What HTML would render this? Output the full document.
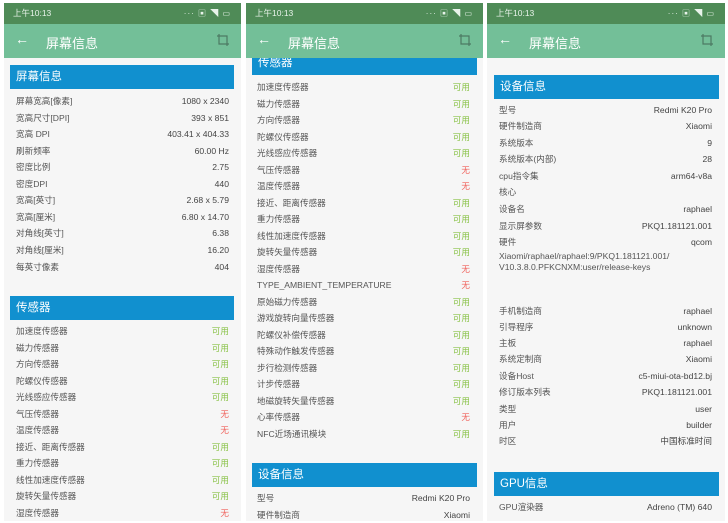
<!DOCTYPE html>
<html><head><meta charset="utf-8"><style>
*{margin:0;padding:0;box-sizing:border-box}
body{width:728px;height:521px;background:#fff;position:relative;overflow:hidden;font-family:"Liberation Sans","Noto Sans CJK SC",sans-serif}
.p{position:absolute;top:3px;height:518px;background:#f6f6f6;overflow:hidden}
.sb{position:absolute;left:0;right:0;top:0;height:21px;background:#4f8b57;color:#e8f3ea;font-size:8.5px;line-height:21px;padding-left:9px}
.sb i{position:absolute;right:10px;top:0;font-style:normal;font-size:8px;letter-spacing:1px}
.tb{position:absolute;left:0;right:0;top:21px;height:34px;background:#73bf98;color:#fff}
.tb .a{position:absolute;left:11px;top:7px;font-size:14px}
.tb .t{position:absolute;left:42px;top:9px;font-size:13px}
.tb svg{position:absolute;right:11px;top:9px}
.h{position:absolute;background:#1190cf;color:#fff;font-size:11.5px;line-height:24px;padding-left:6px;height:24px}
.r{position:absolute;height:16px;line-height:16px;font-size:8.6px;color:#555;white-space:nowrap}
.v{position:absolute;height:16px;line-height:16px;font-size:8.6px;color:#444;text-align:right;white-space:nowrap}
.g{color:#8bc34a}.n{color:#f0605a}
</style></head><body>

<div class="p" style="left:4px;width:237px"></div>
<div class="p" style="left:246px;width:237px"></div>
<div class="p" style="left:487px;width:238px"></div>

<!-- bars -->
<div class="p" style="left:4px;width:237px;background:none">
<div class="sb">上午10:13<i>··· ▣ ◥ ▭</i></div>
<div class="tb"><span class="a">←</span><span class="t">屏幕信息</span><svg width="14" height="14" viewBox="0 0 14 14" fill="none" stroke="#4d7a63" stroke-width="1.2"><path d="M3 1v10h10M1 3h10v10"/></svg></div>
</div>
<div class="p" style="left:246px;width:237px;background:none">
<div class="h" style="left:6px;width:225px;top:34px;height:38px;padding-top:14px;line-height:24px">传感器</div>
<div class="sb">上午10:13<i>··· ▣ ◥ ▭</i></div>
<div class="tb"><span class="a">←</span><span class="t">屏幕信息</span><svg width="14" height="14" viewBox="0 0 14 14" fill="none" stroke="#4d7a63" stroke-width="1.2"><path d="M3 1v10h10M1 3h10v10"/></svg></div>
</div>
<div class="p" style="left:487px;width:238px;background:none">
<div class="sb">上午10:13<i>··· ▣ ◥ ▭</i></div>
<div class="tb"><span class="a">←</span><span class="t">屏幕信息</span><svg width="14" height="14" viewBox="0 0 14 14" fill="none" stroke="#4d7a63" stroke-width="1.2"><path d="M3 1v10h10M1 3h10v10"/></svg></div>
</div>

<!-- panel 1 -->
<div class="h" style="left:10px;width:224px;top:65px">屏幕信息</div>
<div class="r" style="left:16px;top:93px">屏幕宽高[像素]</div><div class="v" style="right:499px;top:93px">1080 x 2340</div>
<div class="r" style="left:16px;top:110px">宽高尺寸[DPI]</div><div class="v" style="right:499px;top:110px">393 x 851</div>
<div class="r" style="left:16px;top:126px">宽高 DPI</div><div class="v" style="right:499px;top:126px">403.41 x 404.33</div>
<div class="r" style="left:16px;top:143px">刷新频率</div><div class="v" style="right:499px;top:143px">60.00 Hz</div>
<div class="r" style="left:16px;top:159px">密度比例</div><div class="v" style="right:499px;top:159px">2.75</div>
<div class="r" style="left:16px;top:176px">密度DPI</div><div class="v" style="right:499px;top:176px">440</div>
<div class="r" style="left:16px;top:192px">宽高[英寸]</div><div class="v" style="right:499px;top:192px">2.68 x 5.79</div>
<div class="r" style="left:16px;top:209px">宽高[厘米]</div><div class="v" style="right:499px;top:209px">6.80 x 14.70</div>
<div class="r" style="left:16px;top:225px">对角线[英寸]</div><div class="v" style="right:499px;top:225px">6.38</div>
<div class="r" style="left:16px;top:242px">对角线[厘米]</div><div class="v" style="right:499px;top:242px">16.20</div>
<div class="r" style="left:16px;top:259px">每英寸像素</div><div class="v" style="right:499px;top:259px">404</div>
<div class="h" style="left:10px;width:224px;top:296px">传感器</div>
<div class="r" style="left:16px;top:323px">加速度传感器</div><div class="v g" style="right:499px;top:323px">可用</div>
<div class="r" style="left:16px;top:340px">磁力传感器</div><div class="v g" style="right:499px;top:340px">可用</div>
<div class="r" style="left:16px;top:356px">方向传感器</div><div class="v g" style="right:499px;top:356px">可用</div>
<div class="r" style="left:16px;top:373px">陀螺仪传感器</div><div class="v g" style="right:499px;top:373px">可用</div>
<div class="r" style="left:16px;top:389px">光线感应传感器</div><div class="v g" style="right:499px;top:389px">可用</div>
<div class="r" style="left:16px;top:406px">气压传感器</div><div class="v n" style="right:499px;top:406px">无</div>
<div class="r" style="left:16px;top:422px">温度传感器</div><div class="v n" style="right:499px;top:422px">无</div>
<div class="r" style="left:16px;top:439px">接近、距离传感器</div><div class="v g" style="right:499px;top:439px">可用</div>
<div class="r" style="left:16px;top:455px">重力传感器</div><div class="v g" style="right:499px;top:455px">可用</div>
<div class="r" style="left:16px;top:472px">线性加速度传感器</div><div class="v g" style="right:499px;top:472px">可用</div>
<div class="r" style="left:16px;top:488px">旋转矢量传感器</div><div class="v g" style="right:499px;top:488px">可用</div>
<div class="r" style="left:16px;top:505px">湿度传感器</div><div class="v n" style="right:499px;top:505px">无</div>

<!-- panel 2 -->
<div class="r" style="left:257px;top:79px">加速度传感器</div><div class="v g" style="right:258px;top:79px">可用</div>
<div class="r" style="left:257px;top:96px">磁力传感器</div><div class="v g" style="right:258px;top:96px">可用</div>
<div class="r" style="left:257px;top:112px">方向传感器</div><div class="v g" style="right:258px;top:112px">可用</div>
<div class="r" style="left:257px;top:129px">陀螺仪传感器</div><div class="v g" style="right:258px;top:129px">可用</div>
<div class="r" style="left:257px;top:145px">光线感应传感器</div><div class="v g" style="right:258px;top:145px">可用</div>
<div class="r" style="left:257px;top:162px">气压传感器</div><div class="v n" style="right:258px;top:162px">无</div>
<div class="r" style="left:257px;top:178px">温度传感器</div><div class="v n" style="right:258px;top:178px">无</div>
<div class="r" style="left:257px;top:195px">接近、距离传感器</div><div class="v g" style="right:258px;top:195px">可用</div>
<div class="r" style="left:257px;top:211px">重力传感器</div><div class="v g" style="right:258px;top:211px">可用</div>
<div class="r" style="left:257px;top:228px">线性加速度传感器</div><div class="v g" style="right:258px;top:228px">可用</div>
<div class="r" style="left:257px;top:244px">旋转矢量传感器</div><div class="v g" style="right:258px;top:244px">可用</div>
<div class="r" style="left:257px;top:261px">湿度传感器</div><div class="v n" style="right:258px;top:261px">无</div>
<div class="r" style="left:257px;top:277px">TYPE_AMBIENT_TEMPERATURE</div><div class="v n" style="right:258px;top:277px">无</div>
<div class="r" style="left:257px;top:294px">原始磁力传感器</div><div class="v g" style="right:258px;top:294px">可用</div>
<div class="r" style="left:257px;top:310px">游戏旋转向量传感器</div><div class="v g" style="right:258px;top:310px">可用</div>
<div class="r" style="left:257px;top:327px">陀螺仪补偿传感器</div><div class="v g" style="right:258px;top:327px">可用</div>
<div class="r" style="left:257px;top:343px">特殊动作触发传感器</div><div class="v g" style="right:258px;top:343px">可用</div>
<div class="r" style="left:257px;top:360px">步行检测传感器</div><div class="v g" style="right:258px;top:360px">可用</div>
<div class="r" style="left:257px;top:376px">计步传感器</div><div class="v g" style="right:258px;top:376px">可用</div>
<div class="r" style="left:257px;top:393px">地磁旋转矢量传感器</div><div class="v g" style="right:258px;top:393px">可用</div>
<div class="r" style="left:257px;top:409px">心率传感器</div><div class="v n" style="right:258px;top:409px">无</div>
<div class="r" style="left:257px;top:426px">NFC近场通讯模块</div><div class="v g" style="right:258px;top:426px">可用</div>
<div class="h" style="left:252px;width:225px;top:463px">设备信息</div>
<div class="r" style="left:257px;top:490px">型号</div><div class="v" style="right:258px;top:490px">Redmi K20 Pro</div>
<div class="r" style="left:257px;top:507px">硬件制造商</div><div class="v" style="right:258px;top:507px">Xiaomi</div>

<!-- panel 3 -->
<div class="h" style="left:494px;width:225px;top:75px">设备信息</div>
<div class="r" style="left:499px;top:102px">型号</div><div class="v" style="right:16px;top:102px">Redmi K20 Pro</div>
<div class="r" style="left:499px;top:118px">硬件制造商</div><div class="v" style="right:16px;top:118px">Xiaomi</div>
<div class="r" style="left:499px;top:135px">系统版本</div><div class="v" style="right:16px;top:135px">9</div>
<div class="r" style="left:499px;top:151px">系统版本(内部)</div><div class="v" style="right:16px;top:151px">28</div>
<div class="r" style="left:499px;top:168px">cpu指令集</div><div class="v" style="right:16px;top:168px">arm64-v8a</div>
<div class="r" style="left:499px;top:184px">核心</div>
<div class="r" style="left:499px;top:201px">设备名</div><div class="v" style="right:16px;top:201px">raphael</div>
<div class="r" style="left:499px;top:218px">显示屏参数</div><div class="v" style="right:16px;top:218px">PKQ1.181121.001</div>
<div class="r" style="left:499px;top:234px">硬件</div><div class="v" style="right:16px;top:234px">qcom</div>
<div class="r" style="left:499px;top:251px;line-height:11px">Xiaomi/raphael/raphael:9/PKQ1.181121.001/<br>V10.3.8.0.PFKCNXM:user/release-keys</div>
<div class="r" style="left:499px;top:303px">手机制造商</div><div class="v" style="right:16px;top:303px">raphael</div>
<div class="r" style="left:499px;top:319px">引导程序</div><div class="v" style="right:16px;top:319px">unknown</div>
<div class="r" style="left:499px;top:335px">主板</div><div class="v" style="right:16px;top:335px">raphael</div>
<div class="r" style="left:499px;top:351px">系统定制商</div><div class="v" style="right:16px;top:351px">Xiaomi</div>
<div class="r" style="left:499px;top:368px">设备Host</div><div class="v" style="right:16px;top:368px">c5-miui-ota-bd12.bj</div>
<div class="r" style="left:499px;top:384px">修订版本列表</div><div class="v" style="right:16px;top:384px">PKQ1.181121.001</div>
<div class="r" style="left:499px;top:401px">类型</div><div class="v" style="right:16px;top:401px">user</div>
<div class="r" style="left:499px;top:417px">用户</div><div class="v" style="right:16px;top:417px">builder</div>
<div class="r" style="left:499px;top:433px">时区</div><div class="v" style="right:16px;top:433px">中国标准时间</div>
<div class="h" style="left:494px;width:225px;top:472px">GPU信息</div>
<div class="r" style="left:499px;top:499px">GPU渲染器</div><div class="v" style="right:16px;top:499px">Adreno (TM) 640</div>
</body></html>
